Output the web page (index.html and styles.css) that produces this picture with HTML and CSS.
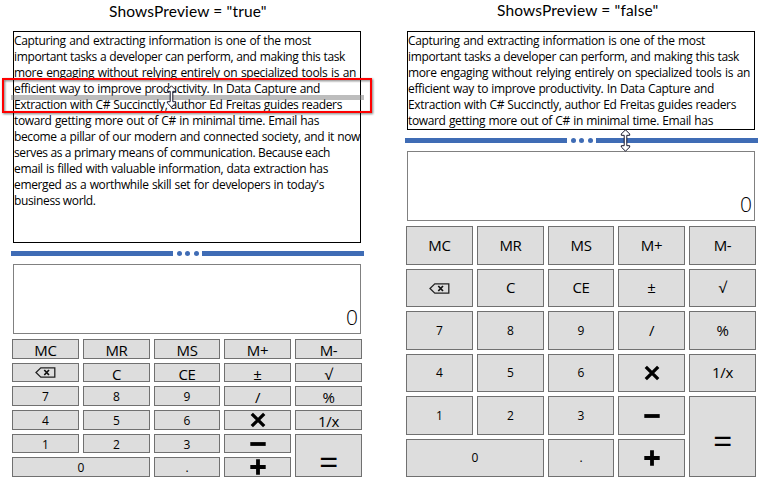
FILE: index.html
```
<!DOCTYPE html>
<html lang="en">
<head>
<meta charset="utf-8">
<title>ShowsPreview</title>
<link rel="stylesheet" href="styles.css">
</head>
<body>
<svg class="defs" width="0" height="0">
  <symbol id="back" viewBox="0 0 21 11"><path d="M5.8.8H19.8V10.2H5.8L1 5.5Z" fill="none" stroke="#222" stroke-width="1.3"/><path d="M9.3 3L14 8M14 3L9.3 8" stroke="#111" stroke-width="1.7"/></symbol>
  <symbol id="times" viewBox="0 0 16 16"><path d="M1.8 1.8L14.2 14.2M14.2 1.8L1.8 14.2" stroke="#000" stroke-width="3.3"/></symbol>
  <symbol id="minus" viewBox="0 0 16 16"><path d="M.3 8H15.7" stroke="#000" stroke-width="3.8"/></symbol>
  <symbol id="plus" viewBox="0 0 16 16"><path d="M.3 8H15.7M8 .3V15.7" stroke="#000" stroke-width="3.8"/></symbol>
  <symbol id="resize" viewBox="0 0 11 23"><path d="M5.5 .8L9.7 5V6.3H6.8V16.7H9.7V18L5.5 22.2L1.3 18V16.7H4.2V6.3H1.3V5Z" fill="#fff" stroke="#15152a" stroke-width="1"/></symbol>
</svg>
<main class="page">
  <section class="demo preview">
    <h1>ShowsPreview = "true"</h1>
    <div class="text">
      <p>Capturing and extracting information is one of the most</p>
      <p>important tasks a developer can perform, and making this task</p>
      <p>more engaging without relying entirely on specialized tools is an</p>
      <p>efficient way to improve productivity. In Data Capture and</p>
      <p>Extraction with C# Succinctly, author Ed Freitas guides readers</p>
      <p>toward getting more out of C# in minimal time. Email has</p>
      <p>become a pillar of our modern and connected society, and it now</p>
      <p>serves as a primary means of communication. Because each</p>
      <p>email is filled with valuable information, data extraction has</p>
      <p>emerged as a worthwhile skill set for developers in today's</p>
      <p>business world.</p>
    </div>
    <div class="ghost"></div>
    <div class="callout"></div>
    <svg class="cursor"><use href="#resize"/></svg>
    <div class="splitter"><i></i><b></b><b></b><b></b><i></i></div>
    <div class="display">0</div>
    <div class="keys">
      <div class="key"><span>MC</span></div><div class="key"><span>MR</span></div><div class="key"><span>MS</span></div><div class="key"><span>M+</span></div><div class="key"><span>M-</span></div>
      <div class="key"><svg class="back"><use href="#back"/></svg></div><div class="key"><span>C</span></div><div class="key"><span>CE</span></div><div class="key"><span>±</span></div><div class="key"><span>√</span></div>
      <div class="key num"><span>7</span></div><div class="key num"><span>8</span></div><div class="key num"><span>9</span></div><div class="key"><span>/</span></div><div class="key"><span>%</span></div>
      <div class="key num"><span>4</span></div><div class="key num"><span>5</span></div><div class="key num"><span>6</span></div><div class="key"><svg class="op"><use href="#times"/></svg></div><div class="key"><span>1/x</span></div>
      <div class="key num"><span>1</span></div><div class="key num"><span>2</span></div><div class="key num"><span>3</span></div><div class="key"><svg class="op"><use href="#minus"/></svg></div><div class="key equals"><span>=</span></div>
      <div class="key num zero"><span>0</span></div><div class="key num"><span>.</span></div><div class="key"><svg class="op"><use href="#plus"/></svg></div>
    </div>
  </section>
  <section class="demo live">
    <h1>ShowsPreview = "false"</h1>
    <div class="text">
      <p>Capturing and extracting information is one of the most</p>
      <p>important tasks a developer can perform, and making this task</p>
      <p>more engaging without relying entirely on specialized tools is an</p>
      <p>efficient way to improve productivity. In Data Capture and</p>
      <p>Extraction with C# Succinctly, author Ed Freitas guides readers</p>
      <p>toward getting more out of C# in minimal time. Email has</p>
    </div>
    <svg class="cursor"><use href="#resize"/></svg>
    <div class="splitter"><i></i><b></b><b></b><b></b><i></i></div>
    <div class="display">0</div>
    <div class="keys">
      <div class="key"><span>MC</span></div><div class="key"><span>MR</span></div><div class="key"><span>MS</span></div><div class="key"><span>M+</span></div><div class="key"><span>M-</span></div>
      <div class="key"><svg class="back"><use href="#back"/></svg></div><div class="key"><span>C</span></div><div class="key"><span>CE</span></div><div class="key"><span>±</span></div><div class="key"><span>√</span></div>
      <div class="key num"><span>7</span></div><div class="key num"><span>8</span></div><div class="key num"><span>9</span></div><div class="key"><span>/</span></div><div class="key"><span>%</span></div>
      <div class="key num"><span>4</span></div><div class="key num"><span>5</span></div><div class="key num"><span>6</span></div><div class="key"><svg class="op"><use href="#times"/></svg></div><div class="key"><span>1/x</span></div>
      <div class="key num"><span>1</span></div><div class="key num"><span>2</span></div><div class="key num"><span>3</span></div><div class="key"><svg class="op"><use href="#minus"/></svg></div><div class="key equals"><span>=</span></div>
      <div class="key num zero"><span>0</span></div><div class="key num"><span>.</span></div><div class="key"><svg class="op"><use href="#plus"/></svg></div>
    </div>
  </section>
</main>
</body>
</html>
```
FILE: styles.css
```
* { box-sizing: border-box; }
body { margin: 0; background: #fff; color: #000; font-family: "Open Sans", "Noto Sans", sans-serif; }
.defs { position: absolute; }
.page { display: flex; gap: 41px; width: 765px; height: 485px; padding-left: 11px; overflow: hidden; }
.demo { position: relative; width: 353px; flex: none; }
h1 { margin: 0; height: 31px; font: 400 15.5px/22px Lato, sans-serif; letter-spacing: 0.15px; white-space: nowrap; }
.preview h1 { padding: 0 0 0 98px; }
.live h1 { padding: 0 0 0 92px; line-height: 20px; }
.text { width: 348px; margin-left: 2px; padding: 1px 0 0; border: 1px solid #000; overflow: hidden; }
.preview .text { height: 212px; }
.live .text { height: 99px; }
.text p { margin: 0; height: 16px; font-size: 12px; line-height: 16px; letter-spacing: -0.36px; white-space: nowrap; text-align-last: justify; }
.text p:nth-child(1) { width: 297px; }
.text p:nth-child(2) { width: 331px; }
.text p:nth-child(3) { width: 342px; }
.text p:nth-child(4) { width: 306px; }
.text p:nth-child(5) { width: 328px; }
.text p:nth-child(6) { width: 305px; }
.text p:nth-child(7) { width: 346px; }
.text p:nth-child(8) { width: 315px; }
.text p:nth-child(9) { width: 314px; }
.text p:nth-child(10) { width: 310px; }
.text p:nth-child(11) { width: 81px; }

/* drag preview overlays */
.ghost { position: absolute; left: 0; top: 95px; width: 353px; height: 5px; background: rgba(128,128,128,.52); }
.callout { position: absolute; left: -9px; top: 78px; width: 370px; height: 35px; border: 2px solid #f00; filter: drop-shadow(1.5px 1.5px 1px rgba(0,0,0,.55)); }
.cursor { position: absolute; width: 11px; height: 23px; z-index: 2; }
.preview .cursor { left: 155px; top: 85px; }
.live .cursor { left: 215px; top: 129px; }

.splitter { display: flex; align-items: center; gap: 3.5px; height: 5px; margin: 8px 0; }
.splitter i { width: 162px; height: 5px; background: #3f6cb5; }
.splitter i:last-child { margin-left: auto; }
.splitter b { width: 5px; height: 5px; border-radius: 50%; background: #3f6cb5; }
.display { width: 348px; height: 70px; margin-left: 2px; border: 1px solid #808080; padding: 0 2px 0 0; text-align: right; font-size: 21px; font-weight: 300; line-height: 105px; overflow: hidden; }
.live .display { margin-top: 8px; }

.keys { display: grid; grid-template-columns: 67px 67px 66px 67px 67px; column-gap: 4px; row-gap: 4px; margin: 5px 0 0 1px; width: 350px; }
.preview .keys { grid-template-rows: 20px 19px 20px 20px 19px 20px; }
.live .keys { grid-template-rows: 39px 38px 39px 38px 39px 38px; }
.key { display: flex; align-items: center; justify-content: center; background: #ddd; border: 1px solid #707070; font-size: 15px; letter-spacing: -0.3px; overflow: hidden; }
.key span { position: relative; line-height: 20px; flex: none; }
.preview .key span { top: 1px; }
.live .key span { top: -1px; }
.key.num { font-size: 12px; letter-spacing: 0; }
.preview .key.num span { top: 1px; }
.live .key.num span { top: 0; }
.zero { grid-column: span 2; }
.key.equals { grid-column: 5; grid-row: 5 / 7; font-size: 34px; }
.live .key.equals span { top: 4px; }
.preview .key.equals span { top: 6px; }
.back { width: 21px; height: 11px; }
.op { width: 16px; height: 16px; flex: none; }
```
